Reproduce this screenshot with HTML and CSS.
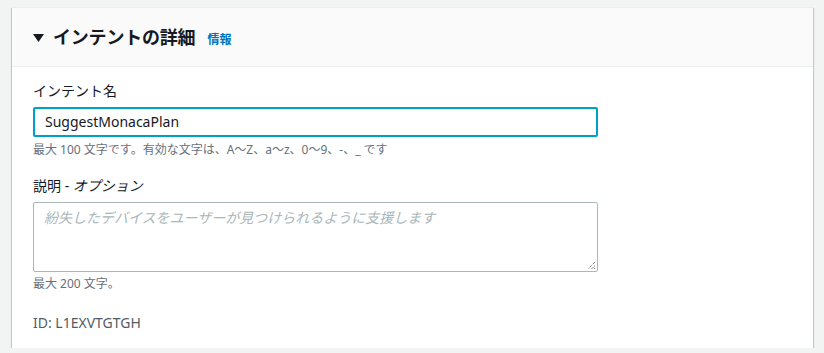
FILE: index.html
```html
<!DOCTYPE html>
<html lang="ja">
<head>
<meta charset="utf-8">
<link rel="stylesheet" href="styles.css">
</head>
<body>
<div class="page">
  <section class="card">
    <header class="card-header">
      <svg class="caret" width="11" height="8" viewBox="0 0 11 8"><polygon points="0,0 11,0 5.5,8" fill="#16191f"/></svg>
      <h2 class="title">インテントの詳細</h2>
      <a class="info">情報</a>
    </header>
    <div class="card-body">
      <div class="field">
        <label class="label">インテント名</label>
        <div class="input focused">SuggestMonacaPlan</div>
        <div class="hint">最大 100 文字です。有効な文字は、A〜Z、a〜z、0〜9、-、_ です</div>
      </div>
      <div class="field">
        <label class="label">説明 - <i>オプション</i></label>
        <div class="textarea">
          <span class="placeholder">紛失したデバイスをユーザーが見つけられるように支援します</span>
          <svg class="grip" width="9" height="9" viewBox="0 0 9 9"><path d="M8 1 L1 8 M8 4.5 L4.5 8 M8 7 L7 8" stroke="#555" stroke-width="1" stroke-dasharray="1 1"/></svg>
        </div>
        <div class="hint">最大 200 文字。</div>
      </div>
      <div class="id">ID: L1EXVTGTGH</div>
    </div>
  </section>
</div>
</body>
</html>
```

FILE: styles.css
```css
html, body {
  margin: 0;
  padding: 0;
  background: #f2f3f3;
  font-family: "Noto Sans", "Noto Sans CJK JP", sans-serif;
  color: #16191f;
}
.page {
  padding: 7px 11px 0 12px;
}
.card {
  background: #fff;
  border-top: 1px solid #eaeded;
  box-shadow: 0 1px 1px 0 rgba(0,28,36,.3), 1px 1px 1px 0 rgba(0,28,36,.15), -1px 1px 1px 0 rgba(0,28,36,.15);
}
.card-header {
  height: 58px;
  background: #fafafa;
  border-bottom: 1px solid #eaeded;
  display: flex;
  align-items: center;
  padding: 0 21px;
}
.caret {
  margin-right: 9px;
  margin-top: 1px;
}
.title {
  margin: 0;
  font-size: 18px;
  font-weight: 700;
  line-height: 24px;
  letter-spacing: -0.2px;
}
.info {
  margin-left: 12px;
  font-size: 12px;
  font-weight: 700;
  color: #0073bb;
  margin-top: 3px;
}
.card-body {
  padding: 13px 21px 14px;
}
.field {
  margin-bottom: 16px;
}
.label {
  display: block;
  font-size: 14px;
  line-height: 22px;
  margin-bottom: 5px;
}
.label i {
  font-style: italic;
}
.input {
  width: 565px;
  box-sizing: border-box;
  height: 30px;
  border: 2px solid #00a1c9;
  border-radius: 2px;
  padding: 0 10px;
  font-size: 14px;
  line-height: 26px;
}
.textarea {
  width: 565px;
  box-sizing: border-box;
  height: 70px;
  border: 1px solid #aab7b8;
  border-radius: 2px;
  padding: 4px 10px;
  font-size: 14px;
  line-height: 22px;
  position: relative;
}
.placeholder {
  color: #aab7b8;
  font-style: italic;
}
.grip {
  position: absolute;
  right: 1px;
  bottom: 1px;
}
.hint {
  font-size: 12px;
  line-height: 18px;
  color: #687078;
  margin-top: 4px;
}
.field + .field .hint {
  margin-top: 3px;
}
.id {
  font-size: 14px;
  line-height: 22px;
  color: #545b64;
  padding-top: 3px;
}
```
